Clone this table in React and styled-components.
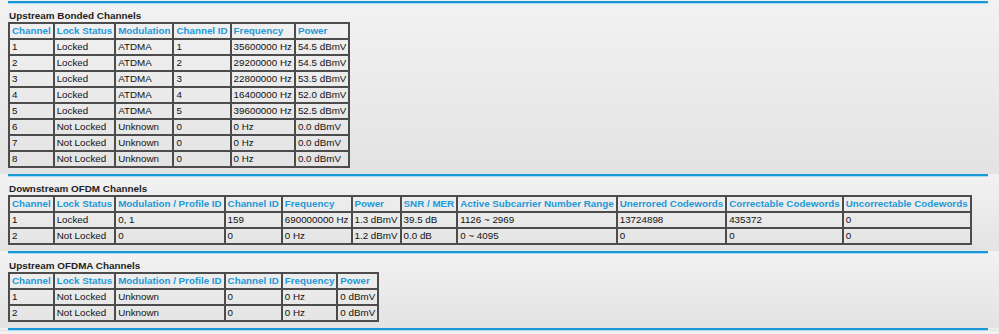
import React from "react";
import styled, { createGlobalStyle } from "styled-components";

const Global = createGlobalStyle`
  html, body { margin: 0; padding: 0; background: #e6e6e6; }
  body { font-family: "Liberation Sans", Arial, sans-serif; }
`;

const Page = styled.div`
  width: 999px;
  height: 334px;
  overflow: hidden;
  padding-top: 1px;
  box-sizing: border-box;
  background: #f1f1f1;
`;

const Section = styled.section`
  padding: 0 11px 0 8px;
  background: linear-gradient(#f2f2f2, #e3e3e3);
`;

const Rule = styled.div`
  height: 2px;
  background: #1a98d5;
  border-bottom: 1px solid #a9d9f1;
`;

const Body = styled.div`
  padding: 6px 0 6px 0;
`;

const Title = styled.div`
  font-size: 9.9px;
  line-height: 12px;
  font-weight: bold;
  color: #1e1e1e;
  padding-left: 1px;
`;

const Table = styled.table`
  border-collapse: separate;
  border-spacing: 0;
  border: 1px solid #4c4c4c;
  font-size: 9.8px;
  line-height: 12px;
`;

const Th = styled.th`
  border: 1px solid #4c4c4c;
  padding: 1px 2px 1px 2px;
  text-align: left;
  font-weight: bold;
  color: #2299d8;
  white-space: nowrap;
`;

const Td = styled.td`
  border: 1px solid #4c4c4c;
  padding: 1px 2px 1px 2px;
  text-align: left;
  color: #111;
  white-space: nowrap;
`;

const upstream = {
  title: "Upstream Bonded Channels",
  head: ["Channel", "Lock Status", "Modulation", "Channel ID", "Frequency", "Power"],
  rows: [
    ["1", "Locked", "ATDMA", "1", "35600000 Hz", "54.5 dBmV"],
    ["2", "Locked", "ATDMA", "2", "29200000 Hz", "54.5 dBmV"],
    ["3", "Locked", "ATDMA", "3", "22800000 Hz", "53.5 dBmV"],
    ["4", "Locked", "ATDMA", "4", "16400000 Hz", "52.0 dBmV"],
    ["5", "Locked", "ATDMA", "5", "39600000 Hz", "52.5 dBmV"],
    ["6", "Not Locked", "Unknown", "0", "0 Hz", "0.0 dBmV"],
    ["7", "Not Locked", "Unknown", "0", "0 Hz", "0.0 dBmV"],
    ["8", "Not Locked", "Unknown", "0", "0 Hz", "0.0 dBmV"],
  ],
};

const downOfdm = {
  title: "Downstream OFDM Channels",
  head: [
    "Channel",
    "Lock Status",
    "Modulation / Profile ID",
    "Channel ID",
    "Frequency",
    "Power",
    "SNR / MER",
    "Active Subcarrier Number Range",
    "Unerrored Codewords",
    "Correctable Codewords",
    "Uncorrectable Codewords",
  ],
  rows: [
    ["1", "Locked", "0, 1", "159", "690000000 Hz", "1.3 dBmV", "39.5 dB", "1126 ~ 2969", "13724898", "435372", "0"],
    ["2", "Not Locked", "0", "0", "0 Hz", "1.2 dBmV", "0.0 dB", "0 ~ 4095", "0", "0", "0"],
  ],
};

const upOfdma = {
  title: "Upstream OFDMA Channels",
  head: ["Channel", "Lock Status", "Modulation / Profile ID", "Channel ID", "Frequency", "Power"],
  rows: [
    ["1", "Not Locked", "Unknown", "0", "0 Hz", "0 dBmV"],
    ["2", "Not Locked", "Unknown", "0", "0 Hz", "0 dBmV"],
  ],
};

function ChannelTable({ data }) {
  return (
    <Section>
      <Rule />
      <Body>
        <Title>{data.title}</Title>
        <Table>
          <tbody>
            <tr>
              {data.head.map((h) => (
                <Th key={h}>{h}</Th>
              ))}
            </tr>
            {data.rows.map((r, i) => (
              <tr key={i}>
                {r.map((c, j) => (
                  <Td key={j}>{c}</Td>
                ))}
              </tr>
            ))}
          </tbody>
        </Table>
      </Body>
    </Section>
  );
}

export default function App() {
  return (
    <>
      <Global />
      <Page>
        <ChannelTable data={upstream} />
        <ChannelTable data={downOfdm} />
        <ChannelTable data={upOfdma} />
        <Section>
          <Rule />
        </Section>
      </Page>
    </>
  );
}
